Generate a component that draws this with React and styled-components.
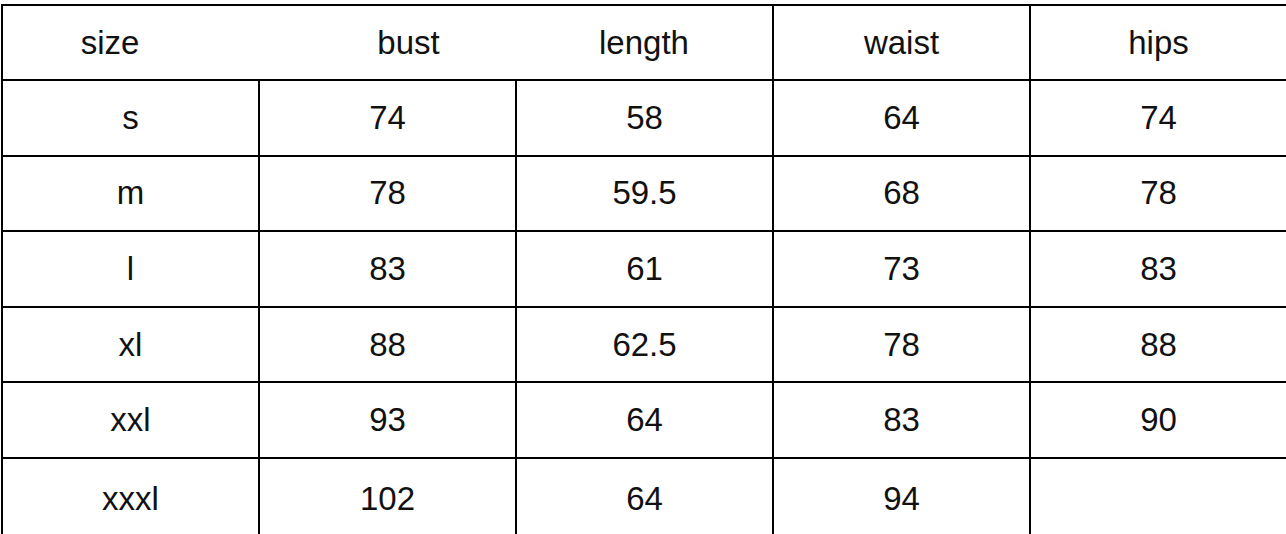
import React from 'react'
import styled, { createGlobalStyle } from 'styled-components'

const GlobalStyle = createGlobalStyle`
  html, body {
    margin: 0;
    padding: 0;
    background: #fff;
  }
  body {
    font-family: 'Liberation Sans', Arial, sans-serif;
    color: #111;
    overflow: hidden;
  }
`

const headers = [
  { label: 'size', shift: -42, joinLeft: false },
  { label: 'bust', shift: 42, joinLeft: true },
  { label: 'length', shift: 0, joinLeft: true },
  { label: 'waist', shift: 0, joinLeft: false },
  { label: 'hips', shift: 0, joinLeft: false }
]

const rows = [
  ['s', '74', '58', '64', '74'],
  ['m', '78', '59.5', '68', '78'],
  ['l', '83', '61', '73', '83'],
  ['xl', '88', '62.5', '78', '88'],
  ['xxl', '93', '64', '83', '90'],
  ['xxxl', '102', '64', '94', '']
]

const Page = styled.div`
  padding: 4px 0 0 1px;
`

const Table = styled.table`
  border-collapse: collapse;
  table-layout: fixed;
  width: 1285px;
  font-size: 33px;
`

const Col = styled.col`
  width: 257px;
`

const HeadCell = styled.th`
  height: 73px;
  padding: 0;
  font-weight: normal;
  text-align: center;
  vertical-align: middle;
  border: 2px solid #000;
  border-left-style: ${p => (p.$joinLeft ? 'hidden' : 'solid')};
  padding-left: ${p => (p.$shift > 0 ? p.$shift : 0)}px;
  padding-right: ${p => (p.$shift < 0 ? -p.$shift : 0)}px;
`

const Cell = styled.td`
  height: 73.6px;
  padding: 0;
  text-align: center;
  vertical-align: middle;
  border: 2px solid #000;

  tr:last-child > & {
    height: 77px;
    padding-top: 2px;
  }
`

export default function App () {
  return (
    <Page>
      <GlobalStyle />
      <Table>
        <colgroup>
          {headers.map(h => <Col key={h.label} />)}
        </colgroup>
        <thead>
          <tr>
            {headers.map(h => (
              <HeadCell key={h.label} $shift={h.shift} $joinLeft={h.joinLeft}>
                {h.label}
              </HeadCell>
            ))}
          </tr>
        </thead>
        <tbody>
          {rows.map(r => (
            <tr key={r[0]}>
              {r.map((v, i) => <Cell key={i}>{v}</Cell>)}
            </tr>
          ))}
        </tbody>
      </Table>
    </Page>
  )
}
